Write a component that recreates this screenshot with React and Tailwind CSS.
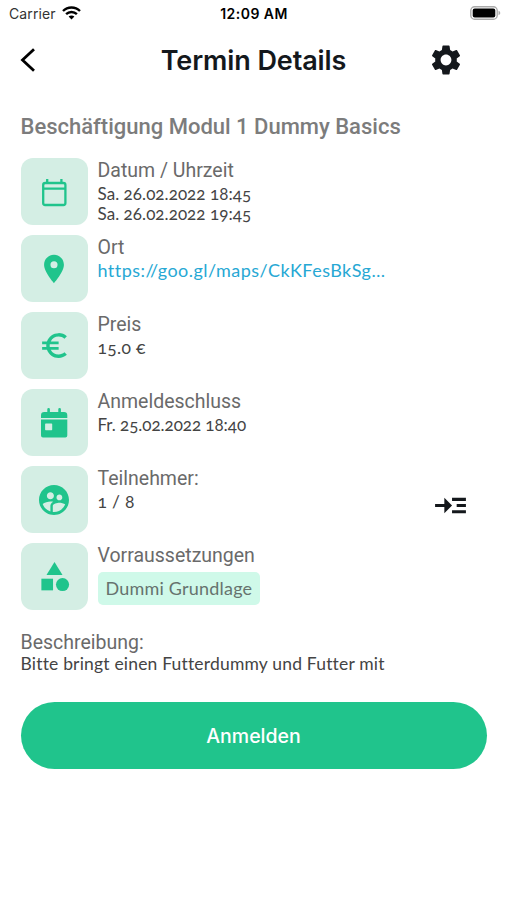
import React from 'react';
import {
    MdCategory,
    MdEuroSymbol,
    MdLocationOn,
    MdReadMore,
    MdSettings,
    MdSupervisedUserCircle
} from 'react-icons/md';

const StatusBar = () => (
    <div className="grid h-7 grid-cols-3 items-center pl-[9px] pr-[6px] font-['Inter',sans-serif] text-[14px] leading-7 text-black">
        <div className="flex items-center gap-[6px]">
            <span className="text-[#333333] tracking-[0.1px]">Carrier</span>
            <svg className="-mt-[2px]" width="19" height="14" viewBox="0 0 19 14" fill="none" stroke="black" strokeWidth="2.4">
                <path d="M1 5C5.7.4 13.3.4 18 5" />
                <path d="M4.1 8.2C7.1 5.3 11.9 5.3 14.9 8.2" />
                <path d="M9.5 13.5L6.6 10.5C8.2 9 10.8 9 12.4 10.5Z" fill="black" stroke="none" />
            </svg>
        </div>
        <span className="-ml-[2px] text-center font-semibold tracking-[0.45px] whitespace-nowrap">12:09 AM</span>
        <svg className="-mt-[2px] justify-self-end" width="31" height="14" viewBox="0 0 31 14">
            <rect x="0.8" y="0.8" width="26.4" height="12.4" rx="3.8" fill="white" stroke="#aaaaaa" strokeWidth="1.4" />
            <rect x="2.7" y="2.6" width="22.6" height="8.8" rx="2" fill="black" />
            <path d="M28.5 4.8C30.8 5.5 30.8 8.5 28.5 9.2Z" fill="#aaaaaa" />
        </svg>
    </div>
);

const CalendarIcon = () => (
    <svg width="40" height="40" viewBox="0 0 40 40" fill="none" stroke="currentColor" strokeWidth="2.3">
        <rect x="9.2" y="11" width="22.2" height="22" rx="2" />
        <path d="M9.2 16.6H31.4M13.2 7V11M27.4 7V11" />
    </svg>
);

const CalendarTodayIcon = () => (
    <svg width="40" height="40" viewBox="0 0 40 40" fill="currentColor">
        <path d="M13.3 9V6.2a1.3 1.3 0 0 1 2.6 0V9h8.4V6.2a1.3 1.3 0 0 1 2.6 0V9H30a3.3 3.3 0 0 1 3.3 3.3V15H7v-2.7A3.3 3.3 0 0 1 10.3 9Z" />
        <path
            fillRule="evenodd"
            d="M7 16.6H33.3V32.5a2 2 0 0 1-2 2H9a2 2 0 0 1-2-2ZM11.8 20.5a.7.7 0 0 0-.7.7V26.5a.7.7 0 0 0 .7.7H17.5a.7.7 0 0 0 .7-.7V21.2a.7.7 0 0 0-.7-.7Z"
        />
    </svg>
);

const Header = () => (
    <header className="flex h-16 items-center pl-[20px] pr-[43px]">
        <button aria-label="Zurück">
            <svg width="16" height="24" viewBox="0 0 16 24" fill="none" stroke="black" strokeWidth="2.8">
                <path d="M14 1.2L2.5 12L14 22.8" />
            </svg>
        </button>
        <h1 className="flex-1 pl-[43px] pt-[2px] text-center font-['Inter',sans-serif] text-[27px] font-semibold tracking-[-0.1px] text-[#14181c]">
            Termin Details
        </h1>
        <button aria-label="Einstellungen">
            <MdSettings size={36} color="#14181c" />
        </button>
    </header>
);

const DetailRow = ({ icon, label, action, children }) => (
    <div className="flex h-[67px] gap-[10px]">
        <div className="flex w-[67px] shrink-0 items-center justify-center rounded-[12px] bg-[#d4eee4] text-[#20c48c]">
            {icon}
        </div>
        <div className="min-w-0 flex-1">
            <div className="pt-px text-[19.5px] leading-[24px] text-[#6a6a6a]">{label}</div>
            {children}
        </div>
        {action}
    </div>
);

const Value = ({ className = 'text-[17px] text-[#444444] tracking-[0.05px]', children }) => (
    <div className={`font-['Lato',sans-serif] leading-[19.5px] oldstyle-nums pt-px ${className}`}>
        {children}
    </div>
);

const App = () => {
    return (
        <div className="min-h-[900px] w-full bg-white font-['Roboto',sans-serif]">
            <StatusBar />
            <Header />
            <main className="px-[20.5px] pt-[21px]">
                <h2 className="text-[22px] leading-[28px] font-medium text-[#7c7c7c]">
                    Beschäftigung Modul 1 Dummy Basics
                </h2>
                <section className="mt-[17.4px] flex flex-col gap-[10px]">
                    <DetailRow icon={<CalendarIcon />} label="Datum / Uhrzeit">
                        <Value>
                            Sa. 26.02.2022 18:45<br />
                            Sa. 26.02.2022 19:45
                        </Value>
                    </DetailRow>
                    <DetailRow icon={<MdLocationOn size={34} />} label="Ort">
                        <Value className="text-[18px] tracking-[0.45px] text-[#27a8d4]">
                            https://goo.gl/maps/CkKFesBkSg…
                        </Value>
                    </DetailRow>
                    <DetailRow icon={<MdEuroSymbol size={33} />} label="Preis">
                        <Value className="text-[17.5px] tracking-[0.3px] text-[#444444]">15.0 €</Value>
                    </DetailRow>
                    <DetailRow icon={<CalendarTodayIcon />} label="Anmeldeschluss">
                        <Value className="text-[17px] tracking-[-0.05px] text-[#444444]">Fr. 25.02.2022 18:40</Value>
                    </DetailRow>
                    <DetailRow
                        icon={<MdSupervisedUserCircle size={36} />}
                        label="Teilnehmer:"
                        action={
                            <button className="mt-[11px] mr-[18px]" aria-label="Teilnehmer anzeigen">
                                <MdReadMore size={37} color="#14181c" />
                            </button>
                        }
                    >
                        <Value className="text-[17.5px] tracking-[0.3px] text-[#444444]">1 / 8</Value>
                    </DetailRow>
                    <DetailRow icon={<MdCategory size={35} />} label="Vorraussetzungen">
                        <span className="mt-[4px] inline-flex h-[33px] items-center rounded-[5px] bg-[#cff9e9] px-[8px] font-['Lato',sans-serif] text-[18px] tracking-[0.2px] text-[#66736e]">
                            Dummi Grundlage
                        </span>
                    </DetailRow>
                </section>
                <section className="mt-[20.6px]">
                    <div className="text-[19.5px] leading-[23px] text-[#6a6a6a]">Beschreibung:</div>
                    <p className="font-['Lato',sans-serif] text-[17.5px] leading-[20px] tracking-[0.18px] text-[#444444]">
                        Bitte bringt einen Futterdummy und Futter mit
                    </p>
                </section>
                <button className="mt-[28px] flex h-[67px] w-full items-center justify-center rounded-full bg-[#20c48c] pt-[2px] font-['Inter',sans-serif] text-[19.5px] font-medium text-white">
                    Anmelden
                </button>
            </main>
        </div>
    );
};

export default App;
